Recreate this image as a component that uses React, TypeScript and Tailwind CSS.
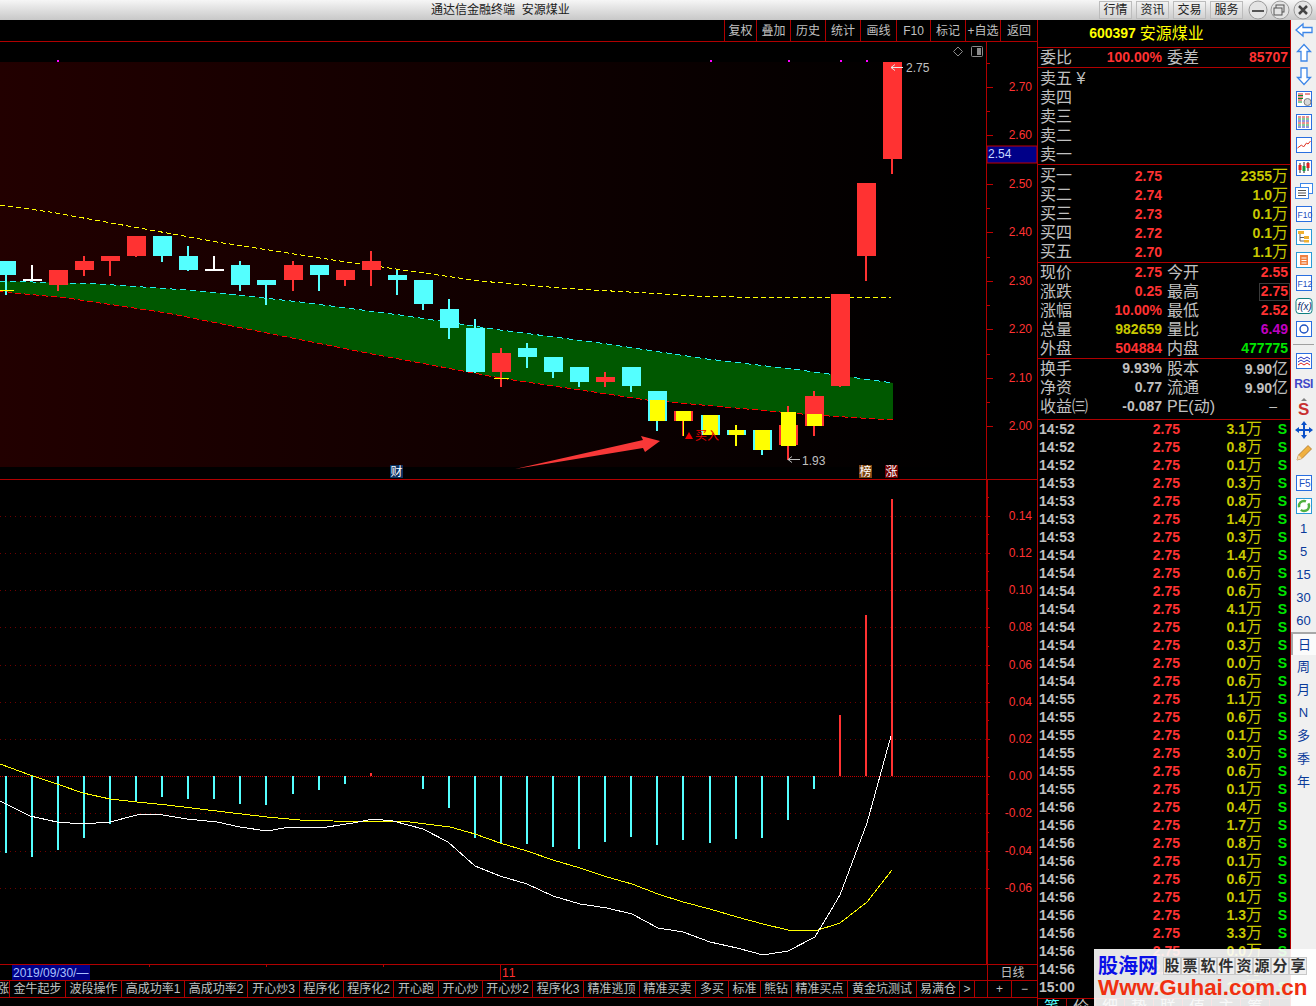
import type { ReactNode } from "react";

const RED = "#ff3232";
const CYAN = "#54ffff";
const YELLOW = "#ffff00";

type Candle = { x: number; top: number; bottom: number; high: number; low: number; color: string; over?: [number, number] };

const candles: Candle[] = [
  { x: 6, top: 261, bottom: 275, high: 261, low: 295, color: CYAN },
  { x: 32, top: 279, bottom: 281, high: 265, low: 281, color: "#ffffff" },
  { x: 58, top: 270, bottom: 285, high: 270, low: 291, color: RED },
  { x: 84, top: 261, bottom: 270, high: 256, low: 276, color: RED },
  { x: 110, top: 256, bottom: 261, high: 256, low: 276, color: RED },
  { x: 136, top: 236, bottom: 256, high: 236, low: 257, color: RED },
  { x: 162, top: 236, bottom: 256, high: 236, low: 262, color: CYAN },
  { x: 188, top: 256, bottom: 270, high: 246, low: 271, color: CYAN },
  { x: 214, top: 269, bottom: 271, high: 256, low: 271, color: "#ffffff" },
  { x: 240, top: 265, bottom: 285, high: 261, low: 291, color: CYAN },
  { x: 266, top: 280, bottom: 285, high: 280, low: 305, color: CYAN },
  { x: 293, top: 265, bottom: 280, high: 261, low: 291, color: RED },
  { x: 319, top: 265, bottom: 275, high: 265, low: 291, color: CYAN },
  { x: 345, top: 270, bottom: 280, high: 270, low: 286, color: RED },
  { x: 371, top: 261, bottom: 270, high: 251, low: 286, color: RED },
  { x: 397, top: 275, bottom: 280, high: 270, low: 295, color: CYAN },
  { x: 423, top: 280, bottom: 304, high: 280, low: 310, color: CYAN },
  { x: 449, top: 309, bottom: 328, high: 299, low: 339, color: CYAN },
  { x: 475, top: 328, bottom: 372, high: 319, low: 373, color: CYAN },
  { x: 501, top: 353, bottom: 372, high: 348, low: 387, color: RED },
  { x: 527, top: 348, bottom: 357, high: 343, low: 368, color: CYAN },
  { x: 553, top: 357, bottom: 372, high: 357, low: 378, color: CYAN },
  { x: 579, top: 367, bottom: 382, high: 367, low: 387, color: CYAN },
  { x: 605, top: 377, bottom: 382, high: 372, low: 387, color: RED },
  { x: 631, top: 367, bottom: 386, high: 367, low: 392, color: CYAN },
  { x: 657, top: 391, bottom: 421, high: 391, low: 431, color: CYAN, over: [400, 421] },
  { x: 683, top: 411, bottom: 421, high: 411, low: 436, color: RED, over: [411, 421] },
  { x: 710, top: 415, bottom: 435, high: 415, low: 435, color: CYAN, over: [415, 435] },
  { x: 736, top: 430, bottom: 435, high: 425, low: 446, color: CYAN, over: [430, 435] },
  { x: 762, top: 430, bottom: 450, high: 430, low: 455, color: CYAN, over: [430, 450] },
  { x: 788, top: 425, bottom: 445, high: 406, low: 460, color: RED, over: [412, 446] },
  { x: 814, top: 396, bottom: 426, high: 391, low: 436, color: RED, over: [414, 426] },
  { x: 840, top: 294, bottom: 386, high: 294, low: 387, color: RED },
  { x: 866, top: 183, bottom: 256, high: 183, low: 281, color: RED },
  { x: 892, top: 62, bottom: 159, high: 62, low: 174, color: RED },
];

const bandTop = "0,281 100,284 200,291 300,302 400,315 500,330 600,343 707,359 800,370 893,383";
const bandBottom = "893,420 813,415 647,400 500,378 367,353 267,333 167,313 67,298 15,293 0,291";
const maLine = "0,205 50,212 167,233 217,242 333,260 480,281 560,288 697,296 777,298 893,297";

const macdBars: [number, number][] = [
  [6, 853], [32, 857], [58, 850], [84, 838], [110, 824], [136, 802], [162, 797], [188, 799], [214, 799],
  [240, 804], [266, 805], [293, 794], [319, 790], [345, 784], [423, 789], [449, 808], [475, 838], [501, 843],
  [527, 844], [553, 847], [579, 849], [605, 842], [631, 837], [657, 845], [683, 840], [710, 843], [736, 839],
  [762, 838], [788, 820], [814, 789],
];
const macdRed: [number, number][] = [[371, 773], [840, 715], [866, 615], [892, 499]];

const difLine =
  "0,801 30,816 57,822 83,824 110,822 137,815 157,814 187,819 217,822 240,827 267,831 290,827 327,827 353,823 373,819 393,821 423,829 448,842 475,866 500,876 527,884 553,896 580,904 607,908 632,914 658,928 683,932 710,942 737,948 763,955 788,951 815,937 840,895 867,823 891,736";
const deaLine =
  "0,764 30,775 57,784 83,793 110,799 137,802 167,805 200,809 233,813 267,817 300,820 333,821 410,822 450,827 475,834 500,843 527,851 553,860 580,868 607,877 632,884 658,894 683,902 710,909 737,917 763,924 788,930 815,931 840,923 867,902 892,870";

const priceTicks = [
  ["2.70", 87], ["2.60", 135], ["2.50", 184], ["2.40", 232], ["2.30", 281], ["2.20", 329], ["2.10", 378], ["2.00", 426],
] as const;
const macdTicks = [
  ["0.14", 516], ["0.12", 553], ["0.10", 590], ["0.08", 627], ["0.06", 665], ["0.04", 702], ["0.02", 739],
  ["0.00", 776], ["-0.02", 813], ["-0.04", 851], ["-0.06", 888],
] as const;

const toolbar = [
  ["复权", 32], ["叠加", 34], ["历史", 35], ["统计", 35], ["画线", 36], ["F10", 34], ["标记", 35], ["+自选", 35], ["返回", 37],
] as const;

const tabs = [
  ["金牛起步", 56], ["波段操作", 56], ["高成功率1", 63], ["高成功率2", 63], ["开心炒3", 52], ["程序化", 44], ["程序化2", 50],
  ["开心跑", 45], ["开心炒", 44], ["开心炒2", 50], ["程序化3", 51], ["精准逃顶", 56], ["精准买卖", 56], ["多买", 33],
  ["标准", 32], ["熊钻", 31], ["精准买点", 56], ["黄金坑测试", 69], ["易满仓", 43], [">", 15],
] as const;

const ticks = [
  ["14:52", "3.1"], ["14:52", "0.8"], ["14:52", "0.1"], ["14:53", "0.3"], ["14:53", "0.8"], ["14:53", "1.4"], ["14:53", "0.3"],
  ["14:54", "1.4"], ["14:54", "0.6"], ["14:54", "0.6"], ["14:54", "4.1"], ["14:54", "0.1"], ["14:54", "0.3"], ["14:54", "0.0"],
  ["14:54", "0.6"], ["14:55", "1.1"], ["14:55", "0.6"], ["14:55", "0.1"], ["14:55", "3.0"], ["14:55", "0.6"], ["14:55", "0.1"],
  ["14:56", "0.4"], ["14:56", "1.7"], ["14:56", "0.8"], ["14:56", "0.1"], ["14:56", "0.6"], ["14:56", "0.1"], ["14:56", "1.3"],
  ["14:56", "3.3"], ["14:56", "0.0"], ["14:56", "0.6"], ["15:00", "1.2"],
];

function TitleBar() {
  return (
    <div className="flex h-5 shrink-0 items-center bg-gradient-to-b from-[#f6f6f6] to-[#c8c8c8] pl-[431px] text-[12px] text-[#202020]">
      <span className="whitespace-pre">通达信金融终端  安源煤业</span>
      <div className="ml-auto flex items-center gap-[4px] pr-[2px]">
        {["行情", "资讯", "交易", "服务"].map((t) => (
          <div key={t} className="flex h-[18px] w-[33px] items-center justify-center border border-[#bcbcbc] bg-gradient-to-b from-[#f2f2f2] to-[#d2d2d2] text-[#222222]">
            {t}
          </div>
        ))}
        <svg width="66" height="20" viewBox="0 0 66 20" className="ml-px">
          <circle cx="10" cy="10" r="9" fill="#e4e4e4" stroke="#9a9a9a" />
          <rect x="4" y="10" width="12" height="2" fill="#555" />
          <circle cx="32" cy="10" r="9" fill="#e4e4e4" stroke="#9a9a9a" />
          <rect x="28" y="5" width="8" height="7" fill="none" stroke="#555" />
          <rect x="26" y="8" width="8" height="7" fill="#e4e4e4" stroke="#555" />
          <circle cx="55" cy="10" r="9" fill="#e4e4e4" stroke="#9a9a9a" />
          <path d="M51 6l8 8M59 6l-8 8" stroke="#444" strokeWidth="2.5" />
        </svg>
      </div>
    </div>
  );
}

function Toolbar() {
  return (
    <div className="flex h-[22px] shrink-0 justify-end border-b border-[#b00000]">
      {toolbar.map(([label, w]) => (
        <div key={label} style={{ width: w }} className="flex items-center justify-center border-l border-[#b00000] pt-px text-[12px] text-[#c0c0c0]">
          {label}
        </div>
      ))}
    </div>
  );
}

function PriceChart() {
  return (
    <svg width="986" height="437" viewBox="0 42 986 437" className="block shrink-0">
      <defs>
        <linearGradient id="chartBg" x1="0" x2="1" y1="0" y2="0">
          <stop offset="0" stopColor="#220000" />
          <stop offset="0.9" stopColor="#020000" />
          <stop offset="1" stopColor="#000000" />
        </linearGradient>
      </defs>
      <rect x="0" y="62" width="986" height="405" fill="url(#chartBg)" />
      {[57, 710, 788, 840, 866].map((x) => (
        <rect key={x} x={x} y="60" width="2" height="2" fill="#ff00ff" />
      ))}
      <polygon points={`${bandTop} ${bandBottom}`} fill="#005800" />
      <g shapeRendering="crispEdges" fill="none">
        <polyline points={bandTop} stroke="#20f0f0" strokeDasharray="6 4" />
        <polyline points={bandBottom} stroke="#ff0000" strokeDasharray="6 3" />
        <polyline points={maLine} stroke={YELLOW} strokeDasharray="5 3" />
      </g>
      <g shapeRendering="crispEdges">
        {candles.map((c) => (
          <g key={c.x}>
            <rect x={c.x - 1} y={c.high} width="2" height={c.low - c.high} fill={c.over && c.x !== 710 && c.x !== 762 && c.x !== 657 ? (c.x === 736 ? YELLOW : RED) : c.color} />
            <rect x={c.x - 9} y={c.top} width="19" height={c.bottom - c.top} fill={c.color} />
            {c.over && <rect x={c.x - 7} y={c.over[0]} width="15" height={c.over[1] - c.over[0]} fill={YELLOW} />}
          </g>
        ))}
        <rect x="0" y="290" width="14" height="1" fill={YELLOW} />
        <rect x="494" y="378" width="15" height="1" fill={YELLOW} />
        <rect x="683" y="421" width="1" height="15" fill={YELLOW} />
      </g>
      <polygon points="515,469 643,440 641,436 660,441 645,452 643,448" fill="#f83838" />
      <polygon points="689,432 693,439 685,439" fill="#f00000" />
      <text x="695" y="440" fontSize="12" fill="#e80000">买入</text>
      <path d="M903 67.5h-12M895 64.5l-4 3 4 3" fill="none" stroke="#e8e8e8" />
      <text x="906" y="72" fontSize="12" fill="#c0c0c0">2.75</text>
      <path d="M800 459.5h-12M792 456.5l-4 3 4 3" fill="none" stroke="#c0c0c0" />
      <text x="802" y="465" fontSize="12" fill="#c0c0c0">1.93</text>
      <path d="M958 47l4.5 4.5-4.5 4.5-4.5-4.5z" fill="none" stroke="#8a8a8a" />
      <rect x="971.5" y="46.5" width="11" height="10" rx="1" fill="none" stroke="#8a8a8a" />
      <rect x="977" y="48" width="4" height="7" fill="#8a8a8a" />
      <rect x="390" y="465" width="13" height="13" fill="#0a3060" />
      <text x="390.5" y="476" fontSize="12" fill="#ffffff">财</text>
      <rect x="859" y="465" width="13" height="13" fill="#7c4410" />
      <text x="859.5" y="476" fontSize="12" fill="#ffffff">榜</text>
      <rect x="885" y="465" width="13" height="13" fill="#700000" />
      <text x="885.5" y="476" fontSize="12" fill="#ffffff">涨</text>
    </svg>
  );
}

function PriceAxis() {
  return (
    <svg width="50" height="437" viewBox="987 42 50 437" className="block shrink-0">
      {priceTicks.map(([label, y]) => (
        <g key={label}>
          <rect x="987" y={y} width="6" height="1" fill="#c00000" />
          <rect x="987" y={y - 24} width="3" height="1" fill="#c00000" />
          <text x="1032" y={y + 4} fontSize="12" textAnchor="end" fill={RED}>{label}</text>
        </g>
      ))}
      <rect x="987" y="146" width="50" height="17" fill="#000088" stroke="#c00000" />
      <text x="988" y="158" fontSize="12" fill="#c8d8ff">2.54</text>
    </svg>
  );
}

function MacdChart() {
  return (
    <svg width="986" height="484" viewBox="0 480 986 484" className="block shrink-0">
      <g shapeRendering="crispEdges">
        {macdTicks.map(([label, y]) => (
          <line key={label} x1="0" x2="986" y1={y + 0.5} y2={y + 0.5} stroke={y === 776 ? "#c00000" : "#700000"} strokeDasharray={y === 776 ? "1 1" : "1 4"} />
        ))}
        {macdBars.map(([x, bottom]) => (
          <rect key={x} x={x - 1} y="776" width="2" height={bottom - 776} fill={CYAN} />
        ))}
        {macdRed.map(([x, top]) => (
          <rect key={x} x={x - 1} y={top} width="2" height={776 - top} fill={RED} />
        ))}
        <polyline points={deaLine} fill="none" stroke={YELLOW} />
        <polyline points={difLine} fill="none" stroke="#ffffff" />
      </g>
    </svg>
  );
}

function MacdAxis() {
  return (
    <svg width="49" height="484" viewBox="988 480 49 484" className="block shrink-0">
      {macdTicks.map(([label, y]) => (
        <g key={label}>
          <rect x="988" y={y} width="2" height="1" fill="#c00000" />
          <rect x="988" y={y - 19} width="1" height="1" fill="#c00000" />
          <text x="1032" y={y + 4} fontSize="12" textAnchor="end" fill={RED}>{label}</text>
        </g>
      ))}
    </svg>
  );
}

function DateRow() {
  return (
    <div className="flex h-4 shrink-0 border-b border-[#b00000] text-[12px]">
      <div className="ml-3 flex w-[78px] items-center bg-[#000088] pl-px text-[#a8c0ff]">2019/09/30/—</div>
      <div className="h-[2px] w-[60px] border-r border-[#b00000]" />
      <div className="h-[2px] w-[117px] border-r border-[#b00000]" />
      <div className="h-[2px] w-[117px] border-r border-[#b00000]" />
      <div className="w-[116px]" />
      <div className="flex w-[487px] items-center border-l border-[#b00000] pl-px tracking-[1px] text-[#ff3232]">11</div>
      <div className="flex w-[50px] items-center justify-center border-l border-[#b00000] text-[#c0c0c0]">日线</div>
    </div>
  );
}

function TabRow() {
  return (
    <div className="flex h-[17px] shrink-0 border-b border-[#b00000] text-[12px] text-[#c0c0c0]">
      <div className="flex w-[10px] justify-end overflow-hidden border-r border-[#b00000] leading-[16px]">
        <span className="shrink-0">涨</span>
      </div>
      {tabs.map(([label, w]) => (
        <div key={label} style={{ width: w }} className="flex items-center justify-center border-r border-[#b00000]">
          {label}
        </div>
      ))}
      <div className="w-[12px]" />
      <div className="flex w-[24px] items-center justify-center border-l border-[#b00000]">+</div>
      <div className="flex w-[26px] items-center justify-center border-l border-[#b00000]">−</div>
    </div>
  );
}

function Label({ children }: { children: ReactNode }) {
  return <span className="text-[16px] leading-[19px] text-[#c0c0c0]">{children}</span>;
}

function Num({ children, color, unit }: { children: ReactNode; color: string; unit?: string }) {
  return (
    <span style={{ color }} className="text-[14px] font-bold leading-[19px]">
      {children}
      {unit && <span className="text-[16px] font-normal">{unit}</span>}
    </span>
  );
}

function Quote({ a, av, b, bv }: { a: ReactNode; av: ReactNode; b: ReactNode; bv: ReactNode }) {
  return (
    <div className="flex h-[19px] items-center pl-[2px] pr-[2px]">
      <div className="flex w-[122px] items-center justify-between">
        <Label>{a}</Label>
        {av}
      </div>
      <div className="ml-[5px] flex flex-1 items-center justify-between">
        <Label>{b}</Label>
        {bv}
      </div>
    </div>
  );
}

function Book({ label, price, vol }: { label: string; price: string; vol: string }) {
  return (
    <div className="flex h-[19px] items-center pl-[2px] pr-[2px]">
      <Label>{label}</Label>
      <div className="w-[90px] text-right">
        <Num color={RED}>{price}</Num>
      </div>
      <div className="flex-1 text-right">
        <Num color="#c8c800" unit="万">{vol}</Num>
      </div>
    </div>
  );
}

function QuotePanel() {
  const gray = "#c0c0c0";
  return (
    <div className="flex w-[254px] shrink-0 flex-col border-x border-[#b00000]">
      <div className="flex h-7 items-center justify-center gap-[4px] border-b border-[#b00000] pr-[35px]">
        <Num color={YELLOW}>600397</Num>
        <span className="text-[16px] text-[#ffff00]">安源煤业</span>
      </div>
      <div className="h-5 border-b border-[#b00000]">
        <Quote a="委比" av={<Num color={RED}>100.00%</Num>} b="委差" bv={<Num color={RED}>85707</Num>} />
      </div>
      <div className="border-b border-[#b00000] pt-px">
        {["卖五 ¥", "卖四", "卖三", "卖二", "卖一"].map((s) => (
          <div key={s} className="flex h-[19px] items-center pl-[2px]">
            <Label>{s}</Label>
          </div>
        ))}
      </div>
      <div className="border-b border-[#b00000] pb-px pt-px">
        <Book label="买一" price="2.75" vol="2355" />
        <Book label="买二" price="2.74" vol="1.0" />
        <Book label="买三" price="2.73" vol="0.1" />
        <Book label="买四" price="2.72" vol="0.1" />
        <Book label="买五" price="2.70" vol="1.1" />
      </div>
      <div className="border-b border-[#b00000]">
        <Quote a="现价" av={<Num color={RED}>2.75</Num>} b="今开" bv={<Num color={RED}>2.55</Num>} />
        <Quote
          a="涨跌"
          av={<Num color={RED}>0.25</Num>}
          b="最高"
          bv={
            <span className="-mr-[2px] flex h-[18px] items-center border border-[#3a3a3a] px-px">
              <Num color={RED}>2.75</Num>
            </span>
          }
        />
        <Quote a="涨幅" av={<Num color={RED}>10.00%</Num>} b="最低" bv={<Num color={RED}>2.52</Num>} />
        <Quote a="总量" av={<Num color="#c8c800">982659</Num>} b="量比" bv={<Num color="#c000c0">6.49</Num>} />
        <Quote a="外盘" av={<Num color={RED}>504884</Num>} b="内盘" bv={<Num color="#00e600">477775</Num>} />
      </div>
      <div className="border-b border-[#b00000] pb-[3px]">
        <Quote a="换手" av={<Num color={gray}>9.93%</Num>} b="股本" bv={<Num color={gray} unit="亿">9.90</Num>} />
        <Quote a="净资" av={<Num color={gray}>0.77</Num>} b="流通" bv={<Num color={gray} unit="亿">9.90</Num>} />
        <Quote a="收益㈢" av={<Num color={gray}>-0.087</Num>} b="PE(动)" bv={<span className="mr-[11px] text-[14px] text-[#c0c0c0]">–</span>} />
      </div>
      {ticks.map(([time, vol], i) => (
        <div key={i} className="flex h-[18px] items-center pl-px text-[14px] font-bold">
          <span className="w-[36px] text-[#c0c0c0]">{time}</span>
          <span className="w-[105px] text-right text-[#ff3232]">2.75</span>
          <span className="w-[82px] text-right text-[#c8c800]">
            {vol}
            <span className="text-[16px] font-normal">万</span>
          </span>
          <span className="w-[25px] text-right text-[#00e600]">S</span>
        </div>
      ))}
      <div className="mt-auto flex h-2 items-start overflow-hidden border-t border-[#b00000] text-[16px] leading-[16px] text-[#c0c0c0]">
        {["笔", "价", "细", "势", "联", "值", "主", "筹"].map((t, i) => (
          <div key={t} className={`flex w-[29px] justify-center border-r border-[#b00000] ${i === 0 ? "text-[#54ffff]" : ""}`}>
            {t}
          </div>
        ))}
      </div>
    </div>
  );
}

const blue = "#2a6fe0";

function Box({ children, stroke = blue }: { children: ReactNode; stroke?: string }) {
  return (
    <svg width="20" height="20" viewBox="0 0 20 20">
      <rect x="2.5" y="2.5" width="15" height="15" fill="#ffffff" stroke={stroke} />
      {children}
    </svg>
  );
}

function Arrow({ d }: { d: string }) {
  return (
    <svg width="20" height="20" viewBox="0 0 20 20">
      <path d={d} fill="#ffffff" stroke="#3c86e8" strokeWidth="1.3" />
    </svg>
  );
}

const topIcons: ReactNode[] = [
  <Arrow d="M2 10l7-6v3.5h9v5H9V16z" />,
  <Arrow d="M10 1.5l6.5 7H13V18H7V8.5H3.5z" />,
  <Arrow d="M10 18.5l6.5-7H13V2H7v9.5H3.5z" />,
  <Box>
    <path d="M4 5h5M4 8h5M4 11h4M11 5h5" stroke="#d02020" />
    <path d="M4 6.5h5M4 9.5h5M4 13h4" stroke="#109030" />
    <circle cx="13.5" cy="13" r="3.5" fill="#d8d8d8" stroke="#808080" />
  </Box>,
  <Box>
    <path d="M4 5h12M4 11h12" stroke="#d02020" strokeDasharray="3 1" />
    <path d="M4 7h12M4 13h12" stroke="#109030" strokeDasharray="3 1" />
    <path d="M4 9h12M4 15h12" stroke="#2030c0" strokeDasharray="3 1" />
  </Box>,
  <Box>
    <path d="M3.5 13l4-3 2 2 3-4 1.5 1 2.5-3" fill="none" stroke="#e03020" />
  </Box>,
  <Box>
    <path d="M6 5v10M10 4v11M14 4v9" stroke="#202020" />
    <rect x="4.5" y="7" width="3" height="5" fill="#e02020" />
    <rect x="8.5" y="8" width="3" height="5" fill="#10a040" />
    <rect x="12.5" y="5" width="3" height="5" fill="#e02020" />
  </Box>,
  <svg width="20" height="20" viewBox="0 0 20 20">
    <rect x="6.5" y="2.5" width="12" height="10" fill="#ffffff" stroke="#3c86e8" />
    <rect x="1.5" y="6.5" width="13" height="11" fill="#ffffff" stroke="#3c86e8" />
    <path d="M4 9.5h8M4 12h8M4 14.5h8" stroke="#505050" />
  </svg>,
  <Box>
    <text x="3.5" y="13.5" fontSize="8.5" fill="#1c50c0">F10</text>
  </Box>,
  <Box stroke="#2a9ad8">
    <rect x="4" y="4" width="6" height="3" fill="#f0b030" />
    <rect x="10" y="9" width="5" height="3" fill="#f0b030" />
    <rect x="10" y="13" width="5" height="2.5" fill="#f0b030" />
    <path d="M6 7v7h4M6 10.5h4" stroke="#606060" fill="none" />
  </Box>,
  <Box stroke="#2a9ad8">
    <rect x="6" y="5" width="8" height="10" fill="#f08040" />
    <path d="M7.5 8h5M7.5 10.5h5M7.5 13h5" stroke="#ffffff" />
  </Box>,
  <Box>
    <text x="3.5" y="13.5" fontSize="8.5" fill="#1c50c0">F12</text>
  </Box>,
  <svg width="20" height="20" viewBox="0 0 20 20">
    <rect x="2" y="2.5" width="16" height="15" rx="3" fill="#ffffff" stroke="#108080" />
    <text x="3.5" y="14" fontSize="10" fontStyle="italic" fill="#103070">f(x)</text>
  </svg>,
  <Box>
    <circle cx="10" cy="10" r="4" fill="none" stroke="#1c50c0" strokeWidth="1.4" />
  </Box>,
];

const lowerIcons: ReactNode[] = [
  <Box>
    <path d="M4 8l3-2 3 2 3-2 3 2M4 11l3-2 3 2 3-2 3 2" fill="none" stroke="#2030c0" />
    <path d="M4 14l3-2 3 2 3-2 3 2" fill="none" stroke="#e02020" />
  </Box>,
  <span className="text-[12px] font-bold tracking-[-0.5px] text-[#3f48c8]">RSI</span>,
  <svg width="20" height="20" viewBox="0 0 20 20">
    <text x="4" y="18" fontSize="17" fontWeight="bold" fill="#c83030">S</text>
    <path d="M10 1l3 3H7z" fill="#808080" />
  </svg>,
  <svg width="20" height="20" viewBox="0 0 20 20">
    <path d="M10 1l3 4h-2v4h4V7l4 3-4 3v-2h-4v4h2l-3 4-3-4h2v-4H5v2l-4-3 4-3v2h4V5H7z" fill="#0a50c8" />
  </svg>,
  <svg width="20" height="20" viewBox="0 0 20 20">
    <path d="M3 17l1.5-5L14 2.5l3.5 3.5L8 15.5z" fill="#f0b040" stroke="#a06820" strokeWidth=".7" />
    <path d="M3 17l1.5-5 3.5 3.5z" fill="#f6d8a8" />
  </svg>,
];

function Side({ children, active }: { children: ReactNode; active?: boolean }) {
  return (
    <div className={`flex h-[23px] items-center justify-center ${active ? "border-l-2 border-t-2 border-[#a8a8a8] bg-[#fbfbfb]" : ""}`}>
      {children}
    </div>
  );
}

function Sidebar() {
  return (
    <div className="flex w-[25px] shrink-0 flex-col bg-[#f0f0f0] text-[13px] text-[#0a3a9a]">
      <div className="-mt-[2px] flex h-[23px] items-center justify-center">{topIcons[0]}</div>
      {topIcons.slice(1).map((icon, i) => (
        <Side key={i}>{icon}</Side>
      ))}
      <div className="mx-[2px] my-[4px] h-px bg-[#a0a0a0]" />
      {lowerIcons.map((icon, i) => (
        <Side key={i}>{icon}</Side>
      ))}
      <div className="mt-[7px]" />
      <Side>
        <Box>
          <text x="5" y="14" fontSize="10" fill="#1c50c0">F5</text>
        </Box>
      </Side>
      <Side>
        <Box stroke="#2a9ad8">
          <circle cx="10" cy="10" r="5" fill="none" stroke="#50b040" strokeWidth="2.5" strokeDasharray="11 3" />
        </Box>
      </Side>
      {["1", "5", "15", "30", "60"].map((t) => (
        <Side key={t}>{t}</Side>
      ))}
      <Side active>日</Side>
      {["周", "月", "N", "多", "季", "年"].map((t) => (
        <Side key={t}>{t}</Side>
      ))}
    </div>
  );
}

function Watermark() {
  return (
    <div className="absolute bottom-0 right-0 flex h-[57px] w-[222px] flex-col bg-white/90 pl-1 pt-[6px]">
      <div className="flex items-center gap-[5px]">
        <span className="text-[20px] font-bold leading-[22px] text-[#0a10e8]">股海网</span>
        <div className="flex">
          {"股票软件资源分享".split("").map((c, i) => (
            <span key={i} className="flex h-[18px] w-[18px] items-center justify-center border border-[#c8c8c8] bg-[#eeeeee] text-[15px] font-bold text-[#303030]">
              {c}
            </span>
          ))}
        </div>
      </div>
      <span className="text-[22.4px] font-bold leading-[22px] text-[#f03010]">Www.Guhai.com.cn</span>
    </div>
  );
}

export default function App() {
  return (
    <div className="relative flex h-[1006px] w-[1316px] flex-col overflow-hidden bg-black [font-family:'Liberation_Sans','Noto_Sans_CJK_SC',sans-serif]">
      <TitleBar />
      <div className="flex min-h-0 flex-1">
        <div className="flex w-[1037px] shrink-0 flex-col">
          <Toolbar />
          <div className="flex h-[438px] shrink-0 border-b border-[#b00000]">
            <div className="border-r border-[#b00000]">
              <PriceChart />
            </div>
            <PriceAxis />
          </div>
          <div className="flex h-[485px] shrink-0 border-b border-[#b00000]">
            <div className="border-r-2 border-[#b00000]">
              <MacdChart />
            </div>
            <MacdAxis />
          </div>
          <DateRow />
          <TabRow />
        </div>
        <QuotePanel />
        <Sidebar />
      </div>
      <Watermark />
    </div>
  );
}
